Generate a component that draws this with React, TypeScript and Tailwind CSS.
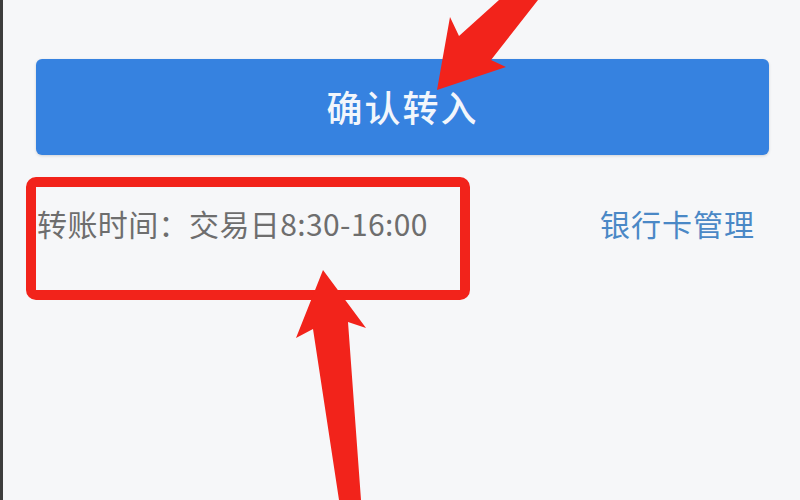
import React from 'react';

const font = { fontFamily: '"Noto Sans CJK SC", "Noto Sans", sans-serif' };

function Annotations() {
    return (
        <svg className="absolute inset-0 pointer-events-none" width="800" height="500" viewBox="0 0 800 500">
            {/* red highlight box */}
            <rect x="28" y="182" width="434" height="113" rx="5" fill="none" stroke="#f2231b" strokeWidth="10" />
            {/* arrow from top */}
            <polygon
                points="434,90 447,17 456,36 496,0 535,0 488,60 503,67"
                fill="#f2231b"
            />
            {/* arrow from bottom */}
            <polygon
                points="320,270 363,328 345,322 358,500 336,500 310,329 293,338"
                fill="#f2231b"
            />
        </svg>
    );
}

export default function App() {
    return (
        <div className="relative w-[800px] h-[500px] overflow-hidden bg-[#f6f7f9] border-l-[3px] border-[#3d3d3d]" style={font}>
            <div className="pt-[59px] pl-[33px] pr-[31px]">
                {/* Confirm button */}
                <button className="w-full h-[96px] rounded-[6px] bg-[#3682e0] shadow-[0_1px_3px_rgba(0,0,0,0.15)] flex items-center justify-center pb-[2px]">
                    <span className="text-[36px] font-medium text-[#f2f6fc] tracking-[2px]">确认转入</span>
                </button>

                {/* Transfer time row */}
                <div className="mt-[48px] h-[40px] flex items-center justify-between pl-[1px] pr-[14px]">
                    <span className="text-[30px] text-[#6e6e6e] tracking-[0.4px]">转账时间：交易日8:30-16:00</span>
                    <span className="text-[30px] text-[#4a88c6] tracking-[1px]">银行卡管理</span>
                </div>
            </div>
            <Annotations />
        </div>
    );
}
